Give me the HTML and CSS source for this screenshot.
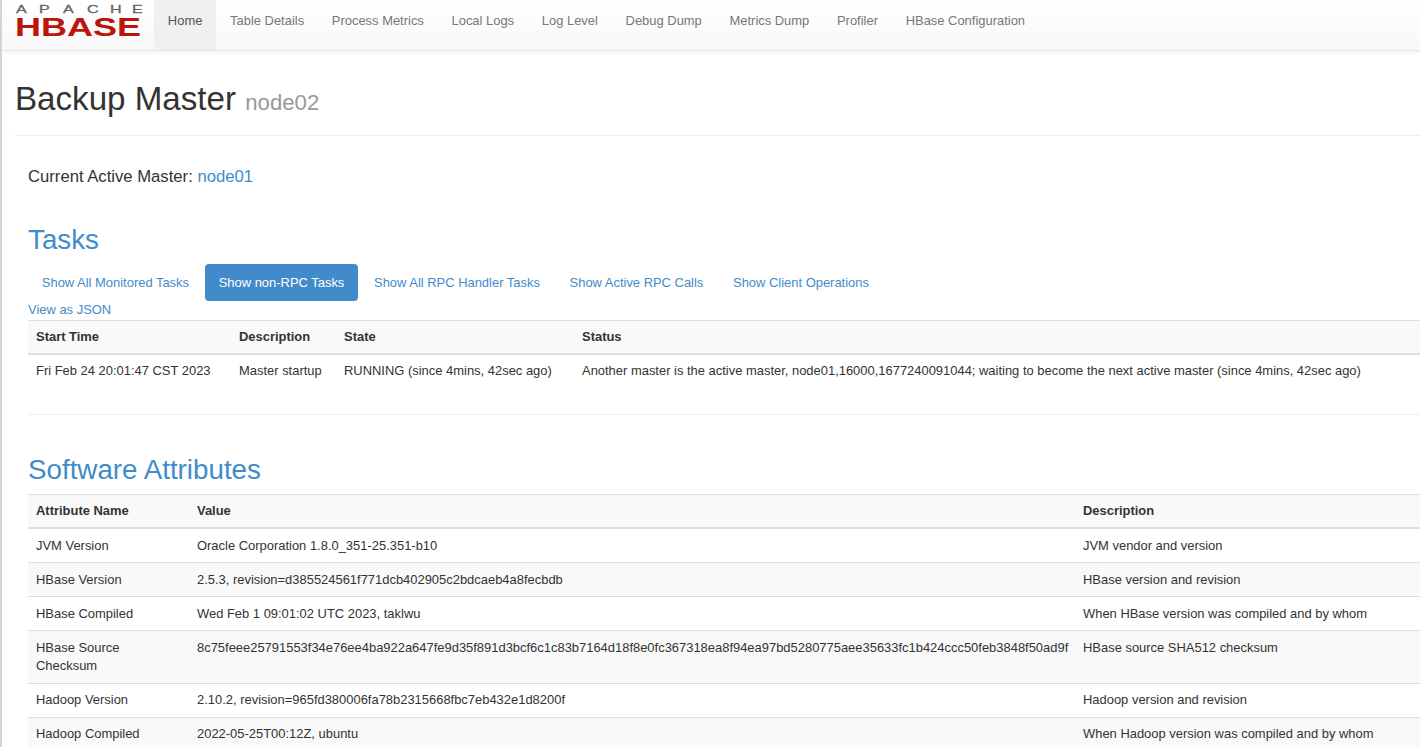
FILE: index.html
```html
<!DOCTYPE html>
<html lang="en">
<head>
<meta charset="utf-8">
<title>Backup Master node02</title>
<link rel="stylesheet" href="styles.css">
</head>
<body>
<nav class="navbar">
  <a class="brand" href="#" aria-label="Apache HBase">
    <svg width="127" height="36" viewBox="0 0 127 36">
      <text class="logo-apache" transform="scale(1.4 1)" y="11.5" x="0.7 17.1 34.3 51.4 67.9 83.6">APACHE</text>
      <text class="logo-hbase" x="0" y="34" textLength="126" lengthAdjust="spacingAndGlyphs">HBASE</text>
    </svg>
  </a>
  <ul class="nav">
    <li class="active"><a href="#">Home</a></li>
    <li><a href="#">Table Details</a></li>
    <li><a href="#">Process Metrics</a></li>
    <li><a href="#">Local Logs</a></li>
    <li><a href="#">Log Level</a></li>
    <li><a href="#">Debug Dump</a></li>
    <li><a href="#">Metrics Dump</a></li>
    <li><a href="#">Profiler</a></li>
    <li><a href="#">HBase Configuration</a></li>
  </ul>
</nav>
<main class="page">
  <header class="page-header">
    <h1>Backup Master <small>node02</small></h1>
  </header>
  <div class="content">
    <p class="active-master">Current Active Master: <a href="#">node01</a></p>
    <h2 class="first">Tasks</h2>
    <ul class="pills">
      <li><a href="#">Show All Monitored Tasks</a></li>
      <li class="active"><a href="#">Show non-RPC Tasks</a></li>
      <li><a href="#">Show All RPC Handler Tasks</a></li>
      <li><a href="#">Show Active RPC Calls</a></li>
      <li><a href="#">Show Client Operations</a></li>
    </ul>
    <a class="json" href="#">View as JSON</a>
    <table class="tasks">
      <thead>
        <tr><th class="t1">Start Time</th><th class="t2">Description</th><th class="t3">State</th><th>Status</th></tr>
      </thead>
      <tbody>
        <tr><td>Fri Feb 24 20:01:47 CST 2023</td><td>Master startup</td><td>RUNNING (since 4mins, 42sec ago)</td><td>Another master is the active master, node01,16000,1677240091044; waiting to become the next active master (since 4mins, 42sec ago)</td></tr>
      </tbody>
    </table>
    <hr>
    <h2 class="second">Software Attributes</h2>
    <table class="attrs">
      <thead>
        <tr><th class="a1">Attribute Name</th><th class="a2">Value</th><th>Description</th></tr>
      </thead>
      <tbody>
        <tr><td>JVM Version</td><td>Oracle Corporation 1.8.0_351-25.351-b10</td><td>JVM vendor and version</td></tr>
        <tr><td>HBase Version</td><td>2.5.3, revision=d385524561f771dcb402905c2bdcaeb4a8fecbdb</td><td>HBase version and revision</td></tr>
        <tr><td>HBase Compiled</td><td>Wed Feb 1 09:01:02 UTC 2023, taklwu</td><td>When HBase version was compiled and by whom</td></tr>
        <tr><td>HBase Source Checksum</td><td>8c75feee25791553f34e76ee4ba922a647fe9d35f891d3bcf6c1c83b7164d18f8e0fc367318ea8f94ea97bd5280775aee35633fc1b424ccc50feb3848f50ad9f</td><td>HBase source SHA512 checksum</td></tr>
        <tr><td>Hadoop Version</td><td>2.10.2, revision=965fd380006fa78b2315668fbc7eb432e1d8200f</td><td>Hadoop version and revision</td></tr>
        <tr><td>Hadoop Compiled</td><td>2022-05-25T00:12Z, ubuntu</td><td>When Hadoop version was compiled and by whom</td></tr>
      </tbody>
    </table>
  </div>
</main>
</body>
</html>
```
FILE: styles.css
```css
html, body { margin: 0; padding: 0; height: 100%; overflow: hidden; }
body {
  font-family: "Liberation Sans", Arial, sans-serif;
  font-size: 12.95px;
  line-height: 18.5px;
  color: #333;
  background: #fff;
  border-left: 2px solid #d4d4d4;
  box-sizing: border-box;
}
a { color: #428bca; text-decoration: none; }
.navbar {
  display: flex;
  height: 50px;
  background: linear-gradient(to bottom, #fff, #f8f8f8);
  border-bottom: 1px solid #e7e7e7;
  box-shadow: 0 1px 5px rgba(0,0,0,.07);
}
.brand { display: block; width: 139px; padding: 2px 0 0 13px; flex: none; }
.brand svg { display: block; overflow: visible; }
.logo-apache { font: 400 11.5px "Liberation Sans", sans-serif; fill: #666; stroke: #666; stroke-width: .3px; }
.logo-hbase { font: 700 25px "Liberation Sans", sans-serif; fill: #ba160c; }
.nav { display: flex; list-style: none; margin: 0; padding: 0; }
.nav a { display: block; padding: 12px 13.85px; color: #777; line-height: 18px; }
.nav li { height: 50px; }
.nav .active { background: #f0f0f0; }
.nav .active a { color: #555; }
.page-header { margin-left: 13px; height: 84px; border-bottom: 1px solid #eee; }
h1 { margin: 0; padding-top: 29px; font-size: 33.15px; line-height: 38px; font-weight: 400; }
h1 small { font-size: 22.2px; color: #999; margin-left: 0; }
.content { padding-left: 26px; }
.active-master { margin: 31px 0 0; font-size: 16.67px; line-height: 20px; }
h2 { margin: 0; font-size: 27.75px; line-height: 34px; font-weight: 400; color: #428bca; }
h2.first { margin-top: 36px; }
.pills { display: flex; list-style: none; margin: 7px 0 0; padding: 0; gap: 2px; }
.pills a { display: block; padding: 9.5px 13.85px 8.5px; line-height: 18.5px; border-radius: 4px; }
.pills .active a { background: #428bca; color: #fff; }
.json { display: block; }
table { width: 100%; border-collapse: collapse; border-top: 1px solid #ddd; table-layout: fixed; }
th { text-align: left; font-weight: 700; background: #f9f9f9; padding: 6.75px 8px; border-bottom: 2px solid #ddd; }
td { padding: 7.25px 8px; vertical-align: top; border-top: 1px solid #ddd; }
.tasks { margin-top: 1px; }
.t1 { width: 187px; }
.t2 { width: 89px; }
.t3 { width: 222px; }
.a1 { width: 145px; }
.a2 { width: 870px; }
.attrs th { padding-bottom: 7.1px; }
.attrs tbody tr:nth-child(even) td { background: #f9f9f9; }
hr { margin: 26px 0 0; border: 0; border-top: 1px solid #eee; }
h2.second { margin-top: 37.5px; margin-bottom: 7.5px; }
```
